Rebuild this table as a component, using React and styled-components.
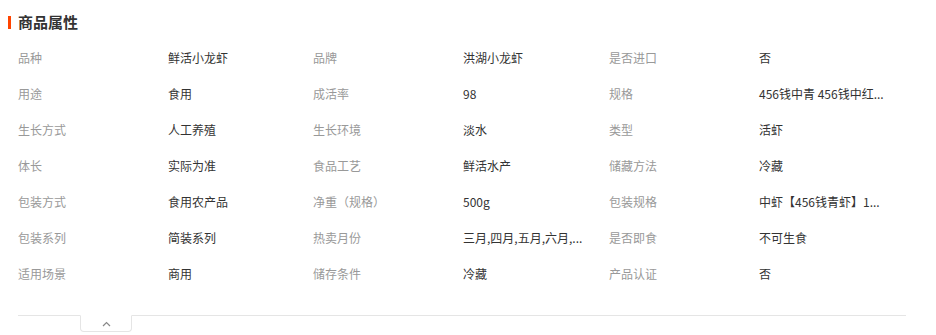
import React from "react"
import styled, { createGlobalStyle } from "styled-components"

const GlobalStyle = createGlobalStyle`
  html, body {
    margin: 0;
    padding: 0;
    background: #fff;
  }
  body {
    font-family: "Noto Sans CJK SC", "Noto Sans", sans-serif;
  }
`

const Panel = styled.section`
  width: 936px;
  height: 335px;
  box-sizing: border-box;
  padding-top: 13px;
  overflow: hidden;
`

const Heading = styled.h3`
  display: flex;
  align-items: center;
  margin: 0;
  height: 18px;
  padding-left: 8px;
  font-size: 15px;
  font-weight: bold;
  color: #333;
  line-height: 18px;

  &::before {
    content: "";
    width: 3px;
    height: 13px;
    margin-right: 7px;
    background: #ff4400;
  }
`

const AttrGrid = styled.dl`
  display: grid;
  grid-template-columns: 150px 145px 150px 146px 150px 145px;
  grid-auto-rows: 36px;
  margin: 9px 0 0;
  padding-left: 18px;
  font-size: 12px;
  line-height: 36px;
`

const Label = styled.dt`
  margin: 0;
  color: #999;
  white-space: nowrap;
`

const Value = styled.dd`
  margin: 0;
  color: #333;
  white-space: nowrap;
`

const Footer = styled.div`
  margin: 23px 30px 0 18px;
  border-top: 1px solid #e5e5e5;
  padding-left: 62px;
`

const ToggleTab = styled.button`
  display: flex;
  align-items: center;
  justify-content: center;
  width: 52px;
  height: 17px;
  margin-top: -1px;
  padding: 0;
  background: #fff;
  border: 1px solid #e5e5e5;
  border-top-color: #fff;
  border-radius: 0 0 4px 4px;
  cursor: pointer;
`

// long values are shown already shortened, as on the page
const attrs = [
  ["品种", "鲜活小龙虾"], ["品牌", "洪湖小龙虾"], ["是否进口", "否"],
  ["用途", "食用"], ["成活率", "98"], ["规格", "456钱中青 456钱中红..."],
  ["生长方式", "人工养殖"], ["生长环境", "淡水"], ["类型", "活虾"],
  ["体长", "实际为准"], ["食品工艺", "鲜活水产"], ["储藏方法", "冷藏"],
  ["包装方式", "食用农产品"], ["净重（规格）", "500g"], ["包装规格", "中虾【456钱青虾】1..."],
  ["包装系列", "简装系列"], ["热卖月份", "三月,四月,五月,六月,..."], ["是否即食", "不可生食"],
  ["适用场景", "商用"], ["储存条件", "冷藏"], ["产品认证", "否"],
]

export default function App() {
  return (
    <>
      <GlobalStyle />
      <Panel>
        <Heading>商品属性</Heading>
        <AttrGrid>
          {attrs.map(([k, v]) => (
            <React.Fragment key={k}>
              <Label>{k}</Label>
              <Value>{v}</Value>
            </React.Fragment>
          ))}
        </AttrGrid>
        <Footer>
          <ToggleTab aria-label="收起">
            <svg width="9" height="6" viewBox="0 0 9 6">
              <path d="M1 5 L4.5 1.5 L8 5" fill="none" stroke="#888" strokeWidth="1.2" />
            </svg>
          </ToggleTab>
        </Footer>
      </Panel>
    </>
  )
}
